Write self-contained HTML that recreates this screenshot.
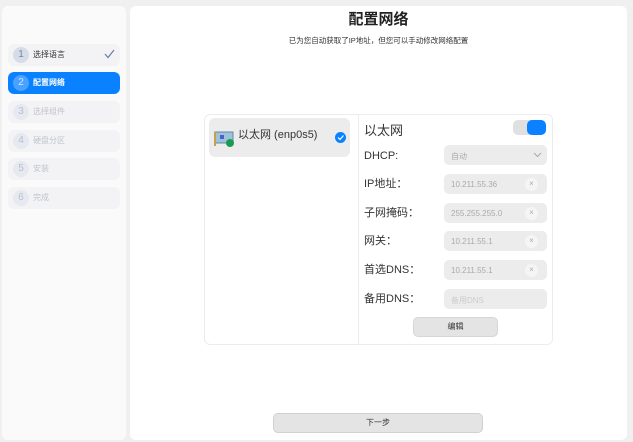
<!DOCTYPE html>
<html><head><meta charset="utf-8"><style>
*{margin:0;padding:0;box-sizing:border-box}
body{width:633px;height:442px;background:#f0f0f0;font-family:"Liberation Sans","Noto Sans CJK SC",sans-serif;position:relative;overflow:hidden}
.side{position:absolute;left:2px;top:6px;width:124px;height:434px;background:#fafafa;border-radius:6px}
.main{position:absolute;left:130px;top:6px;width:497px;height:434px;background:#fff;border-radius:6px}
.step{position:absolute;left:8px;width:112px;height:22px;border-radius:6px;background:#f3f3f5;font-size:8px;color:#c0c4cc}
.step .n{position:absolute;left:5px;top:3px;width:16px;height:16px;border-radius:50%;background:#e6e9f0;color:#b8bfd0;font-size:10px;text-align:center;line-height:16px}
.step .t{position:absolute;left:25px;top:5px}
.a{position:absolute}
.lbl{position:absolute;left:364px;font-size:11px;line-height:14px;color:#333}
.in{position:absolute;left:444px;width:103px;height:20px;background:#ececec;border-radius:5px;font-size:8px;color:#aaa;padding:6px 0 0 7px}
.x{position:absolute;right:9px;top:4px;width:13px;height:13px;border-radius:50%;background:#f5f5f5;font-size:8px;line-height:12px;text-align:center;color:#aaa;padding:0}
</style></head><body>
<div class="side"></div>
<div class="main"></div>
<div class="step" style="top:44px;color:#333"><div class="n" style="background:#d6dce8;color:#7985a5">1</div><div class="t">选择语言</div><svg class="a" style="right:5px;top:5px" width="11" height="10"><path d="M1 5 L4 8.5 L10 1" fill="none" stroke="#6e7da6" stroke-width="1.2"/></svg></div>
<div class="step" style="top:72px;background:#0a82ff;color:#fff;height:22px"><div class="n" style="background:#4aa2ff;color:#cfe4ff">2</div><div class="t" style="font-weight:bold">配置网络</div></div>
<div class="step" style="top:101px"><div class="n">3</div><div class="t">选择组件</div></div>
<div class="step" style="top:130px"><div class="n">4</div><div class="t">硬盘分区</div></div>
<div class="step" style="top:158px"><div class="n">5</div><div class="t">安装</div></div>
<div class="step" style="top:187px"><div class="n">6</div><div class="t">完成</div></div>

<div class="a" style="left:130px;width:497px;top:8px;text-align:center;font-size:15px;font-weight:bold;color:#222">配置网络</div>
<div class="a" style="left:130px;width:497px;top:35px;text-align:center;font-size:7.5px;color:#333">已为您自动获取了IP地址，但您可以手动修改网络配置</div>

<div class="a" style="left:204px;top:114px;width:349px;height:231px;border:1px solid #ececec;border-radius:6px"></div>
<div class="a" style="left:358px;top:114px;width:1px;height:231px;background:#ececec"></div>
<div class="a" style="left:209px;top:118px;width:141px;height:39px;background:#ececec;border-radius:6px"></div>
<svg class="a" style="left:214px;top:130px" width="20" height="17"><rect x="1" y="2" width="18" height="11" fill="#9fc3d6" stroke="#5b8aa8"/><rect x="6" y="5" width="4" height="4" fill="#4b5fd0"/><rect x="0" y="2" width="2" height="14" fill="#c9a04a"/><circle cx="16" cy="13" r="4" fill="#1a9a55"/></svg>
<div class="a" style="left:238px;top:126px;font-size:11px;color:#333">以太网 (enp0s5)</div>
<div class="a" style="left:335px;top:132px;width:11px;height:11px;border-radius:50%;background:#0a82ff"><svg width="11" height="11" style="position:absolute;left:0;top:0"><path d="M3 5.5 L5 7.5 L8.5 3.5" fill="none" stroke="#fff" stroke-width="1.2"/></svg></div>

<div class="a" style="left:364px;top:120px;font-size:13px;color:#333">以太网</div>
<div class="a" style="left:513px;top:120px;width:33px;height:15px;border-radius:5px;background:#e0e0e0"></div>
<div class="a" style="left:527px;top:120px;width:19px;height:15px;border-radius:5px;background:#0a82ff"></div>

<div class="lbl" style="top:149px">DHCP:</div>
<div class="in" style="top:145px">自动<svg class="a" style="right:5px;top:7px" width="9" height="6"><path d="M1 1 L4.5 4.5 L8 1" fill="none" stroke="#aaa"/></svg></div>
<div class="lbl" style="top:177px">IP地址：</div>
<div class="in" style="top:174px">10.211.55.36<div class="x">×</div></div>
<div class="lbl" style="top:206px">子网掩码：</div>
<div class="in" style="top:203px">255.255.255.0<div class="x">×</div></div>
<div class="lbl" style="top:234px">网关：</div>
<div class="in" style="top:231px">10.211.55.1<div class="x">×</div></div>
<div class="lbl" style="top:263px">首选DNS：</div>
<div class="in" style="top:260px">10.211.55.1<div class="x">×</div></div>
<div class="lbl" style="top:292px">备用DNS：</div>
<div class="in" style="top:289px;color:#ccc">备用DNS</div>
<div class="a" style="left:413px;top:317px;width:85px;height:20px;border-radius:5px;background:#e4e4e4;border:1px solid #d6d6d6;font-size:8px;text-align:center;line-height:18px;color:#333">编辑</div>
<div class="a" style="left:273px;top:413px;width:210px;height:20px;border-radius:5px;background:#e4e4e4;border:1px solid #d0d0d0;font-size:8px;text-align:center;line-height:18px;color:#333">下一步</div>
</body></html>
